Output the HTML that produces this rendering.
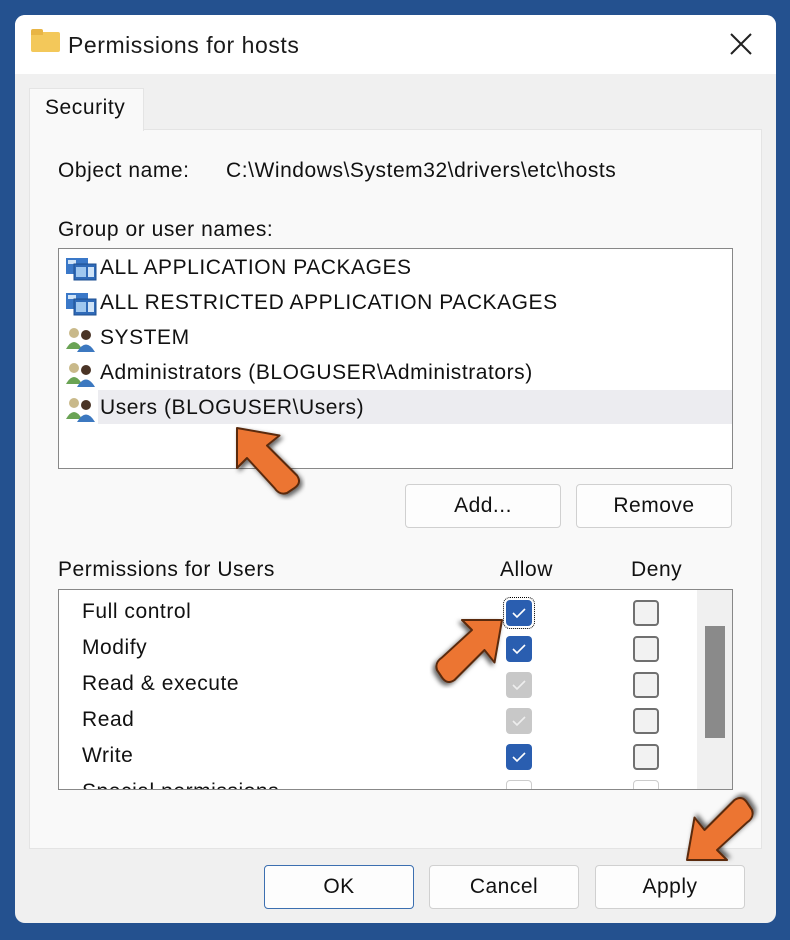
<!DOCTYPE html>
<html><head><style>
*{box-sizing:border-box;margin:0;padding:0}
body{width:790px;height:940px;background:#24518f;font-family:"Liberation Sans",Arial,sans-serif;position:relative;overflow:hidden;color:#111}
.dlg{position:absolute;left:15px;top:15px;width:761px;height:908px;background:#f0f0f0;border-radius:10px;overflow:hidden}
.title{position:absolute;left:0;top:0;width:100%;height:59px;background:#fff}
.abs{position:absolute}
.t{position:absolute;font-size:21px;letter-spacing:0.55px;white-space:nowrap}
.btn{position:absolute;background:#fdfdfd;border:1px solid #d0d0d0;border-radius:4px;font-size:21px;letter-spacing:0.5px;text-align:center}
.cb{position:absolute;width:26px;height:26px;border-radius:4px}
.on{background:#2a5eb0}
.dis{background:#c8c8c8}
.off{background:#f2f2f2;border:2px solid #707070}
.cb svg{position:absolute;left:6px;top:7px}
</style></head><body>
<div class="dlg">
 <div class="title"></div>
 <div class="abs" style="left:16px;top:17px;width:29px;height:20px;background:#f3c85a;border-radius:2px"></div>
 <div class="abs" style="left:16px;top:14px;width:12px;height:6px;background:#e8b545;border-radius:2px 2px 0 0"></div>
 <div class="t" style="left:53px;top:17px;font-size:23px;color:#1a1a1a">Permissions for hosts</div>
 <svg class="abs" style="left:714px;top:17px" width="24" height="24"><path d="M2 2L22 22M22 2L2 22" stroke="#222" stroke-width="2"/></svg>
 <div class="abs" style="left:14px;top:114px;width:733px;height:720px;background:#f9f9f9;border:1px solid #e4e4e4"></div>
 <div class="abs" style="left:14px;top:73px;width:115px;height:43px;background:#f9f9f9;border:1px solid #e4e4e4;border-bottom:none"></div>
 <div class="t" style="left:30px;top:81px">Security</div>
 <div class="t" style="left:43px;top:144px">Object name:</div>
 <div class="t" style="left:211px;top:144px">C:\Windows\System32\drivers\etc\hosts</div>
 <div class="t" style="left:43px;top:203px">Group or user names:</div>
 <div class="abs" style="left:43px;top:233px;width:675px;height:221px;background:#fff;border:1px solid #888"></div>
 <div class="abs" style="left:83px;top:375px;width:634px;height:34px;background:#ececf0"></div>
 <svg class="abs" style="left:50px;top:240px" width="34" height="170">
  <g id="pk"><rect x="1" y="3" width="22" height="16" fill="#3a78c8"/><rect x="3" y="5" width="8" height="4" fill="#cfe3f7"/><rect x="9" y="9" width="22" height="16" fill="#2f6ab8" stroke="#1d4f90"/><rect x="11" y="12" width="10" height="10" fill="#9fc7ef"/><rect x="23" y="12" width="6" height="10" fill="#cfe3f7"/></g>
  <use href="#pk" y="35"/>
  <g id="us" transform="translate(0,70)"><circle cx="9" cy="8" r="5" fill="#c9b98a"/><path d="M1 24 Q9 10 17 24Z" fill="#6aa354"/><circle cx="21" cy="10" r="5" fill="#4a3426"/><path d="M12 27 Q21 12 30 27Z" fill="#3c78c0"/></g>
  <use href="#us" y="35"/><use href="#us" y="70"/>
 </svg>
 <div class="t" style="left:85px;top:241px">ALL APPLICATION PACKAGES</div>
 <div class="t" style="left:85px;top:276px">ALL RESTRICTED APPLICATION PACKAGES</div>
 <div class="t" style="left:85px;top:311px">SYSTEM</div>
 <div class="t" style="left:85px;top:346px">Administrators (BLOGUSER\Administrators)</div>
 <div class="t" style="left:85px;top:381px">Users (BLOGUSER\Users)</div>
 <div class="btn" style="left:390px;top:469px;width:156px;height:44px;line-height:42px">Add...</div>
 <div class="btn" style="left:561px;top:469px;width:156px;height:44px;line-height:42px">Remove</div>
 <div class="t" style="left:43px;top:543px">Permissions for Users</div>
 <div class="t" style="left:485px;top:543px">Allow</div>
 <div class="t" style="left:616px;top:543px">Deny</div>
 <div class="abs" style="left:43px;top:574px;width:675px;height:201px;background:#fff;border:1px solid #888;overflow:hidden">
  <div class="abs" style="left:638px;top:0;width:36px;height:200px;background:#f0f0f0"></div>
  <div class="abs" style="left:646px;top:36px;width:20px;height:112px;background:#8a8a8a"></div>
  <div class="t" style="left:23px;top:10px">Full control</div>
  <div class="t" style="left:23px;top:46px">Modify</div>
  <div class="t" style="left:23px;top:82px">Read &amp; execute</div>
  <div class="t" style="left:23px;top:118px">Read</div>
  <div class="t" style="left:23px;top:154px">Write</div>
  <div class="t" style="left:23px;top:190px">Special permissions</div>
  <div class="cb on" style="left:447px;top:10px;outline:1px dotted #000;outline-offset:2px"><svg width="14" height="12"><path d="M1 6L5 10L13 2" stroke="#fff" stroke-width="1.6" fill="none"/></svg></div>
  <div class="cb on" style="left:447px;top:46px"><svg width="14" height="12"><path d="M1 6L5 10L13 2" stroke="#fff" stroke-width="1.6" fill="none"/></svg></div>
  <div class="cb dis" style="left:447px;top:82px"><svg width="14" height="12"><path d="M1 6L5 10L13 2" stroke="#eee" stroke-width="1.6" fill="none"/></svg></div>
  <div class="cb dis" style="left:447px;top:118px"><svg width="14" height="12"><path d="M1 6L5 10L13 2" stroke="#eee" stroke-width="1.6" fill="none"/></svg></div>
  <div class="cb on" style="left:447px;top:154px"><svg width="14" height="12"><path d="M1 6L5 10L13 2" stroke="#fff" stroke-width="1.6" fill="none"/></svg></div>
  <div class="cb" style="left:447px;top:190px;border:1px solid #ccc"></div>
  <div class="cb off" style="left:574px;top:10px"></div>
  <div class="cb off" style="left:574px;top:46px"></div>
  <div class="cb off" style="left:574px;top:82px"></div>
  <div class="cb off" style="left:574px;top:118px"></div>
  <div class="cb off" style="left:574px;top:154px"></div>
  <div class="cb" style="left:574px;top:190px;border:1px solid #ccc"></div>
 </div>
 <div class="btn" style="left:249px;top:850px;width:150px;height:44px;line-height:42px;border-color:#3c6fb0">OK</div>
 <div class="btn" style="left:414px;top:850px;width:150px;height:44px;line-height:42px">Cancel</div>
 <div class="btn" style="left:580px;top:850px;width:150px;height:44px;line-height:42px">Apply</div>
</div>
<svg class="abs" style="left:0;top:0" width="790" height="940">
 <defs><filter id="sh"><feDropShadow dx="2" dy="2" stdDeviation="2" flood-opacity="0.6"/></filter>
 <path id="ar" d="M0 0 L34 6 L24 14 L48 38 Q52 44 46 48 L40 52 Q34 54 30 48 L8 24 L0 32 Z" fill="#ec7530" stroke="#5a2a10" stroke-width="1.6" stroke-linejoin="round"/></defs>
 <g transform="translate(237,428) scale(1.25)"><use href="#ar" filter="url(#sh)"/></g>
 <g transform="translate(502,620) rotate(90) scale(1.25)"><use href="#ar" filter="url(#sh)"/></g>
 <g transform="translate(687,860) rotate(-90) scale(1.25)"><use href="#ar" filter="url(#sh)"/></g>
</svg>
</body></html>
